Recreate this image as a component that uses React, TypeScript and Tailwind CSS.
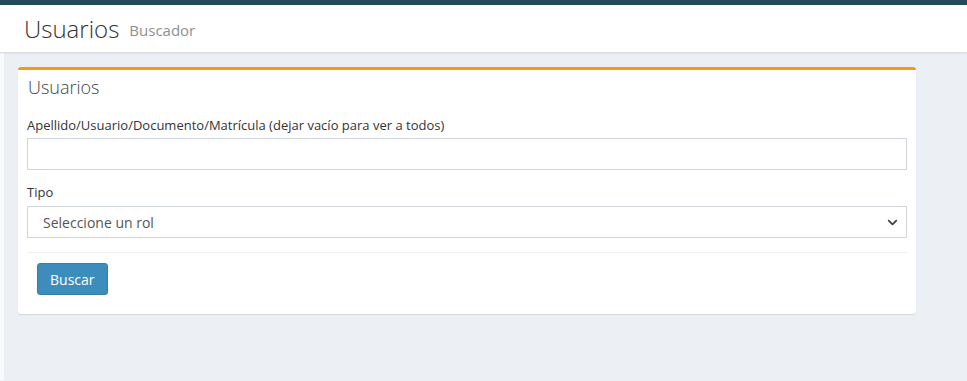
import { ChevronDown } from "lucide-react";

const font = { fontFamily: '"Open Sans", "Liberation Sans", sans-serif' };

const App = () => {
  return (
    <div className="min-h-[381px] w-full bg-[#ecf0f5] flex flex-col" style={font}>
      <div className="h-[5px] bg-[#214b5a]" />
      <div className="flex">
        <div className="w-[4px] shrink-0 bg-[#f9fafc]" />
        <div className="flex-1 flex flex-col">
          <header className="h-[48px] -ml-[4px] bg-white border-b border-[#d8dce2] shadow-[0_1px_2px_rgba(0,0,0,0.05)] flex items-center pl-[24px] gap-[10px]">
            <h1 className="text-[24px] font-light text-[#333] leading-none">Usuarios</h1>
            <span className="text-[15px] text-[#8f8f8f] leading-none mt-[4px]">Buscador</span>
          </header>
          <div className="pt-[14px] pl-[14px] pr-[51px] pb-[66px]">
            <div className="bg-white rounded-[3px] border-t-[3px] border-[#f39c12] shadow-[0_1px_1px_rgba(0,0,0,0.1)]">
              <div className="px-[10px] pt-[4px] pb-[6px]">
                <h3 className="text-[18px] font-light text-[#444] leading-[26px]">Usuarios</h3>
              </div>
              <div className="px-[9px] pt-[10px]">
                <label className="block text-[13px] font-medium text-[#333] mb-[2px]">
                  Apellido/Usuario/Documento/Matrícula (dejar vacío para ver a todos)
                </label>
                <input
                  type="text"
                  className="block w-full h-[32px] border border-[#d2d6de] bg-white px-3 text-[14px] outline-none"
                />
                <label className="block text-[13px] font-medium text-[#333] mt-[13px] mb-[4px]">Tipo</label>
                <div className="relative h-[32px] border border-[#d2d6de] bg-white flex items-center pl-[15px] pr-2">
                  <span className="text-[14px] text-[#555]">Seleccione un rol</span>
                  <ChevronDown className="absolute right-[6px] top-[8px] w-[15px] h-[15px] text-[#444]" strokeWidth={3} />
                </div>
              </div>
              <div className="mx-[9px] mt-[14px] border-t border-[#f0f0f0] px-[10px] pt-[10px] pb-[19px]">
                <button className="h-[32px] px-[12px] bg-[#3c8dbc] border border-[#367fa9] rounded-[3px] text-white text-[14px]">
                  Buscar
                </button>
              </div>
            </div>
          </div>
        </div>
      </div>
    </div>
  );
};

export default App;
